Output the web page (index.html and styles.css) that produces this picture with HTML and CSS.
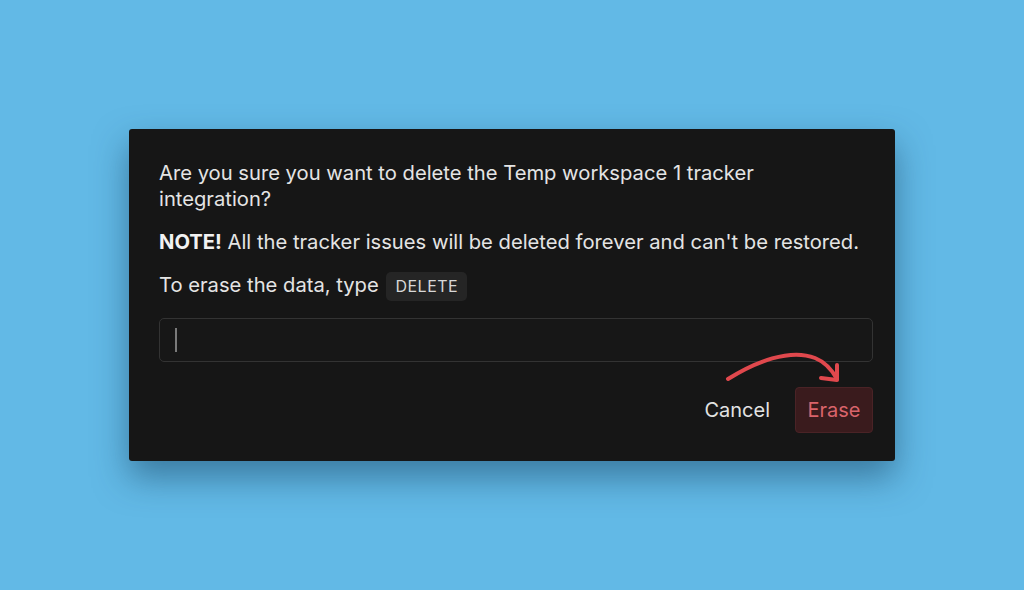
FILE: index.html
```html
<!DOCTYPE html>
<html lang="en">

<head>
    <meta charset="UTF-8">
    <meta name="viewport" content="width=device-width, initial-scale=1.0">
    <title>Delete integration</title>
    <link rel="stylesheet" href="styles.css">
</head>

<body>
    <main class="escena">
        <section class="dialogo">
            <p class="texto">Are you sure you want to delete the Temp workspace 1 tracker integration?</p>
            <p class="texto"><strong>NOTE!</strong> All the tracker issues will be deleted forever and can't be restored.</p>
            <p class="texto">To erase the data, type <span class="clave">DELETE</span></p>

            <div class="campo">
                <span class="cursor"></span>
            </div>

            <div class="acciones">
                <button class="btn-cancelar" type="button">Cancel</button>
                <button class="btn-borrar" type="button">Erase</button>
                <svg class="flecha" width="130" height="50" viewBox="0 0 130 50" fill="none">
                    <path d="M8 35 C 35 18, 70 4, 95 14 C 105 18, 112 26, 117 35" stroke="#e0484d" stroke-width="4" stroke-linecap="round" />
                    <path d="M117 21 L 117 36 L 101 34" stroke="#e0484d" stroke-width="4" stroke-linecap="round" stroke-linejoin="round" />
                </svg>
            </div>
        </section>
    </main>
</body>

</html>
```

FILE: styles.css
```css
body {
    margin: 0;
    padding: 0;
    background-color: #62b9e6;
    font-family: Inter, "Noto Sans", Arial, sans-serif;
}

.escena {
    height: 590px;
    padding-top: 129px;
    box-sizing: border-box;
}

.dialogo {
    width: 766px;
    margin-left: 129px;
    box-sizing: border-box;
    padding: 31px 22px 28px 30px;
    background-color: #161616;
    border-radius: 3px;
    box-shadow: 0 16px 34px rgba(20, 60, 90, 0.5);
}

.texto {
    margin: 0 0 17px;
    color: #e4e4e4;
    font-size: 20.2px;
    line-height: 26px;
    padding-right: 100px;
}

.texto:nth-child(2) {
    padding-right: 0;
}

.texto strong {
    font-weight: 700;
    color: #f2f2f2;
}

.clave {
    display: inline-block;
    margin-left: 2px;
    padding: 1px 9px;
    background-color: #252525;
    border-radius: 5px;
    font-size: 16px;
    letter-spacing: 0.5px;
    line-height: 27px;
    color: #d8d8d8;
}

.campo {
    margin-top: 16px;
    height: 44px;
    box-sizing: border-box;
    border: 1px solid #333333;
    border-radius: 5px;
    background-color: #171717;
    display: flex;
    align-items: center;
    padding-left: 15px;
}

.cursor {
    width: 2px;
    height: 24px;
    background-color: #7a7a7a;
}

.acciones {
    position: relative;
    display: flex;
    justify-content: flex-end;
    align-items: center;
    gap: 25px;
    margin-top: 25px;
}

.acciones button {
    font-family: inherit;
    font-size: 20px;
    cursor: pointer;
}

.btn-cancelar {
    background: none;
    border: none;
    color: #e2e2e2;
    padding: 0;
}

.btn-borrar {
    width: 78px;
    height: 46px;
    background-color: #3a1b1d;
    border: 1px solid #4a2326;
    border-radius: 4px;
    color: #d9646b;
    padding: 0;
}

.flecha {
    position: absolute;
    left: 561px;
    top: -43px;
}
```
